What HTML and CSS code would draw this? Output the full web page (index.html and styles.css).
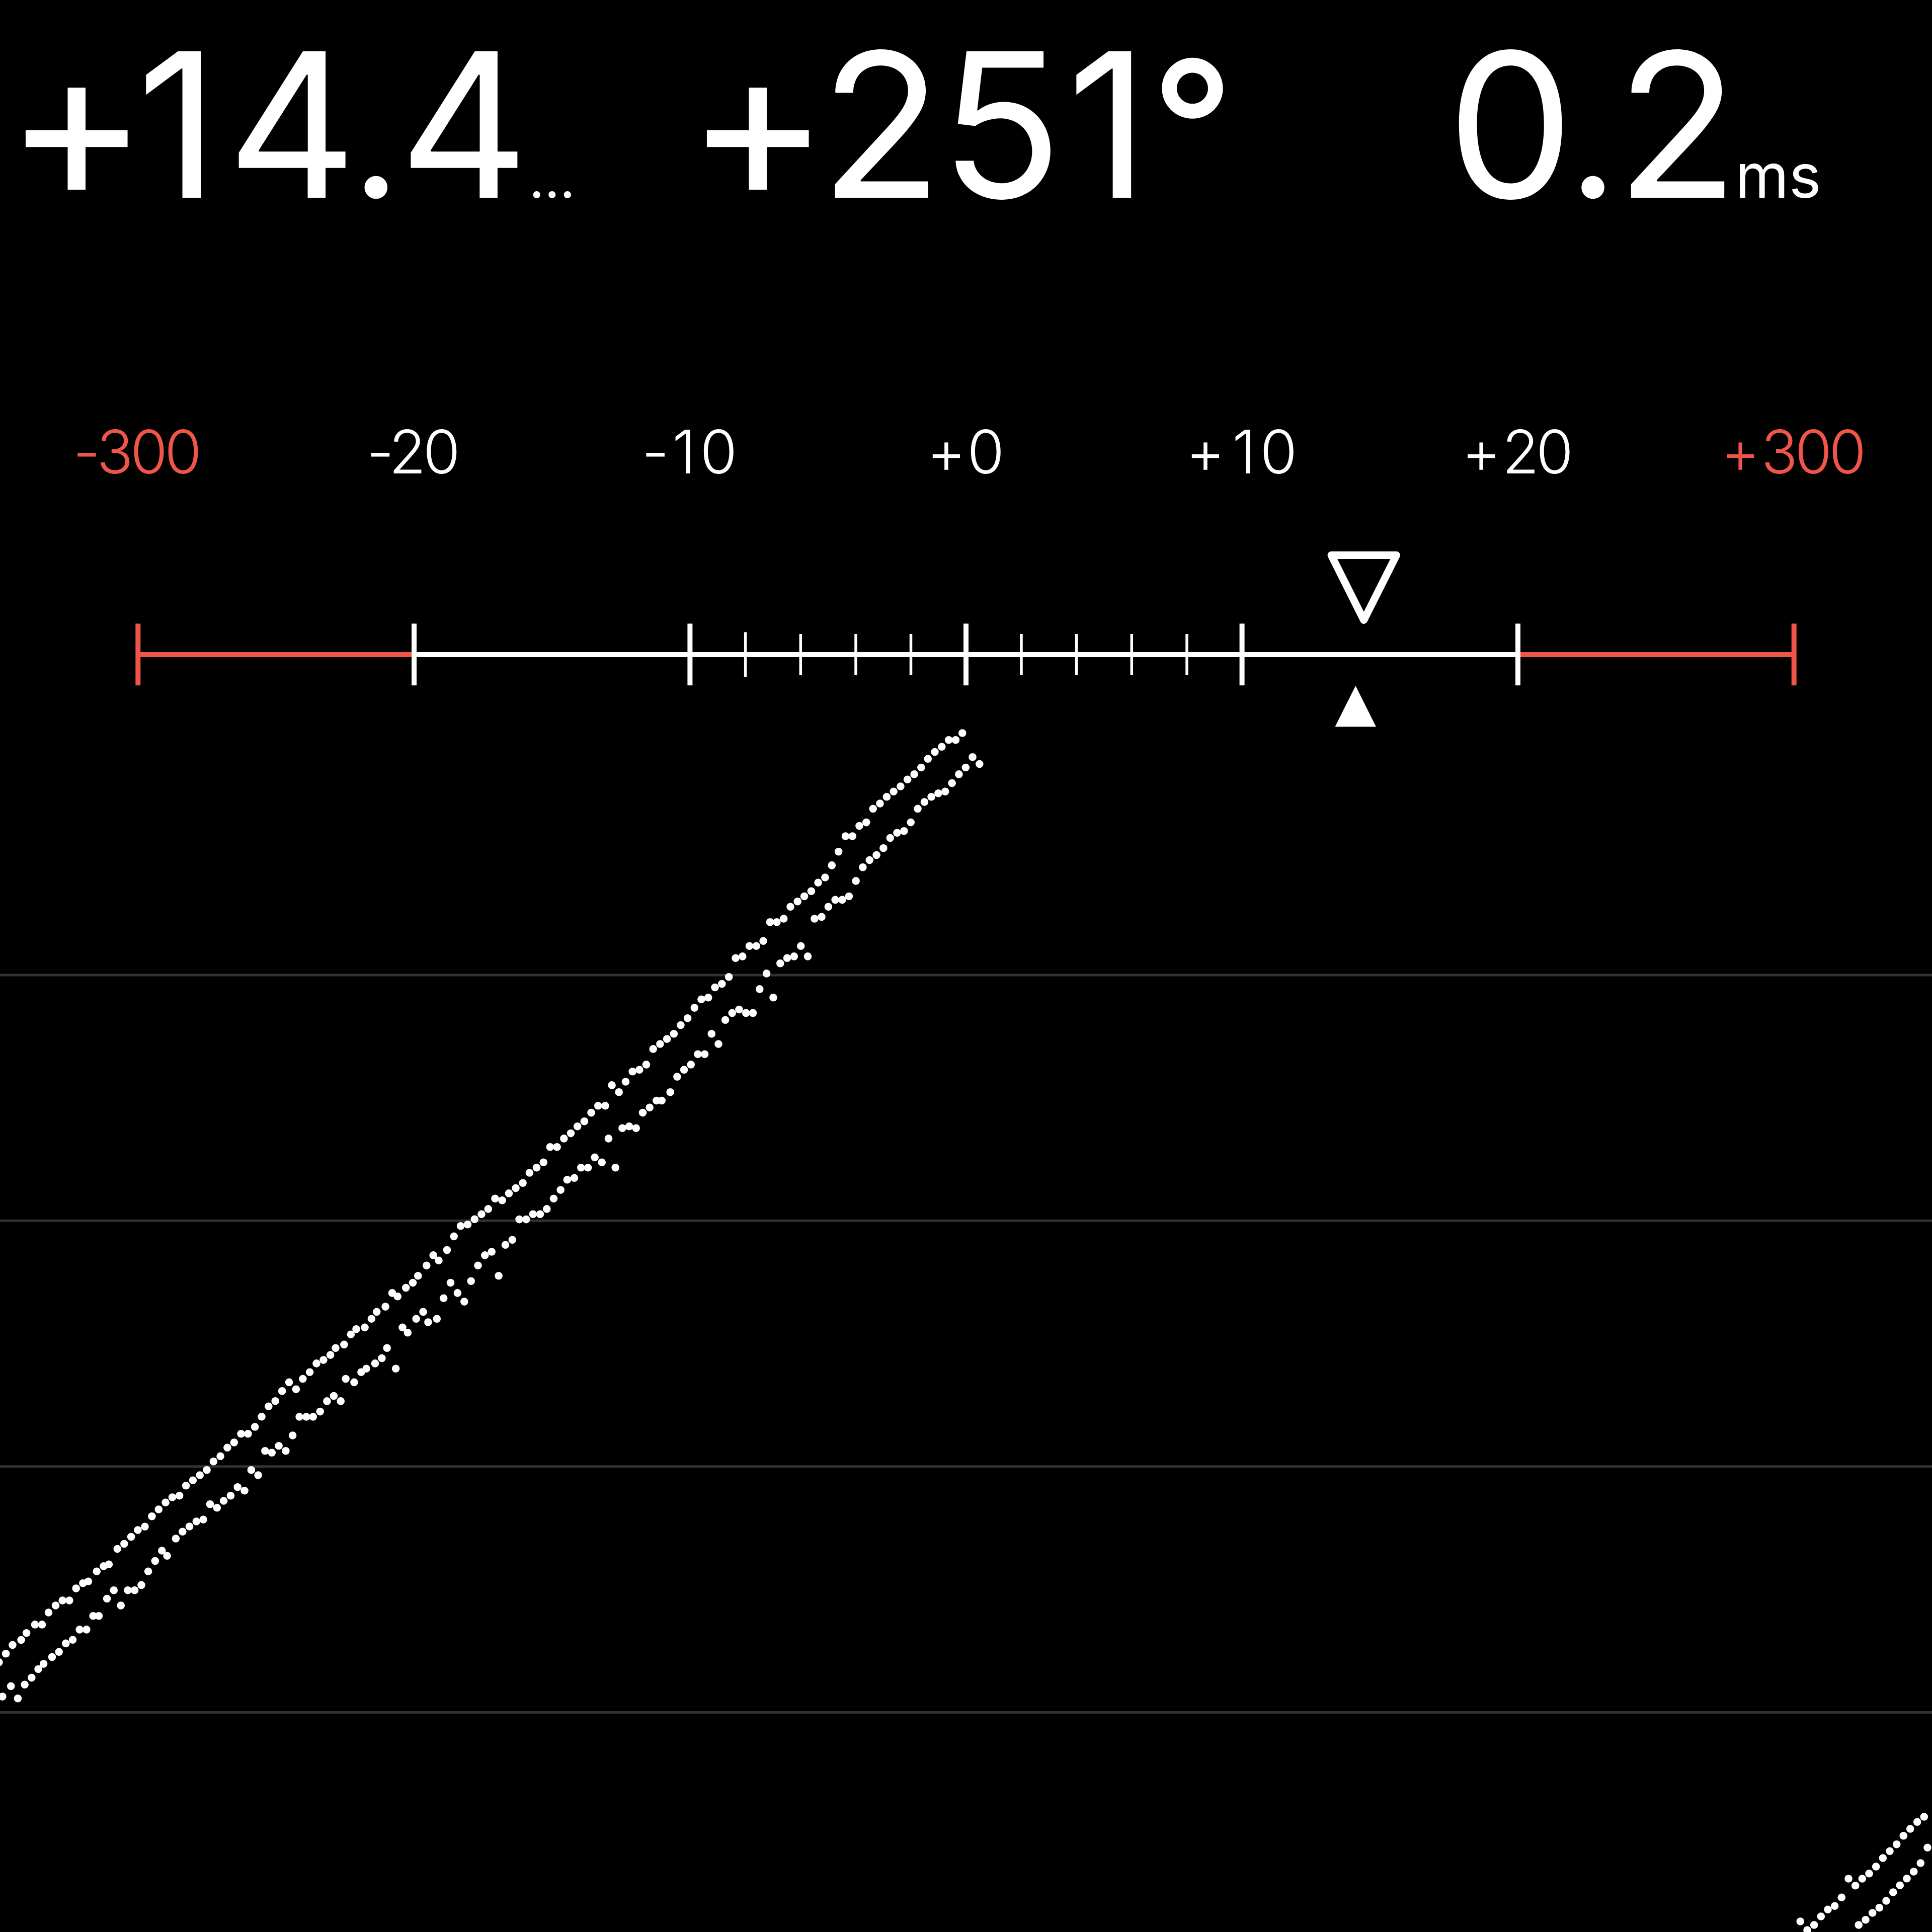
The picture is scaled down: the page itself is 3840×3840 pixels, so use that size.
FILE: index.html
```html
<!DOCTYPE html>
<html lang="en">
<head>
<meta charset="utf-8">
<title>Timegrapher</title>
<link rel="stylesheet" href="styles.css">
</head>
<body>
<main class="app">
  <header class="readouts">
    <div class="readout rate"><span class="value"><span class="sign">+</span><span class="one">1</span><span class="tight">4</span><span class="point">.</span>4</span><span class="unit ellipsis">…</span></div>
    <div class="readout amplitude"><span class="value"><span class="sign">+</span><span class="two">2</span>5<span class="one">1</span><span class="degree">°</span></span></div>
    <div class="readout beat"><span class="value"><span class="tight">0</span><span class="point">.</span><span class="last">2</span></span><span class="unit">ms</span></div>
  </header>

  <div class="labels">
    <div class="limit">-300</div>
    <div>-20</div>
    <div>-<span class="thin-one">1</span>0</div>
    <div><span class="plus">+</span>0</div>
    <div><span class="plus">+</span><span class="thin-one">1</span>0</div>
    <div><span class="plus">+</span>20</div>
    <div class="limit"><span class="plus">+</span>300</div>
  </div>

  <svg class="axis" viewBox="0 1000 3840 450" aria-hidden="true">
    <g class="limit-line">
      <path d="M274.3 1301H823M3017 1301H3565.7"/>
      <path d="M274.3 1239.5V1362.3M3565.7 1239.5V1362.3"/>
    </g>
    <g class="major">
      <path d="M823 1301H3017"/>
      <path d="M823 1239.5V1362.3M1371.4 1239.5V1362.3M1920 1239.5V1362.3M2468.6 1239.5V1362.3M3017 1239.5V1362.3"/>
    </g>
    <path class="minor" d="M1481.6 1256.5V1345.5M1591.3 1260V1342M1701 1260V1342M1810.5 1260V1342M2030 1260V1342M2139.6 1260V1342M2249.3 1260V1342M2359 1260V1342"/>
    <path class="marker-average" d="M2646 1103.5H2775.5L2710.7 1232.5Z"/>
    <path class="marker-current" d="M2694.3 1363L2735 1444.5H2653.5Z"/>
  </svg>

  <svg class="plot" viewBox="0 1450 3840 2390" aria-hidden="true">
    <path class="gridline" d="M0 1938H3840M0 2426.3H3840M0 2914.8H3840M0 3403.5H3840"/>
    <g id="trace"></g>
  </svg>
</main>
<script src="script.js"></script>
</body>
</html>
```
FILE: styles.css
```css
html,
body {
  margin: 0;
  background: #000;
}

.app {
  display: flex;
  flex-direction: column;
  width: 3840px;
  height: 3840px;
  overflow: hidden;
  color: #fff;
  background: #000;
}

.readouts {
  display: grid;
  grid-template-columns: 1371px 1477px 992px;
  height: 800px;
  font-family: Inter, "Liberation Sans", sans-serif;
  font-feature-settings: "calt" 0;
  white-space: nowrap;
}

.readout {
  display: flex;
  align-items: baseline;
  height: 495px;
  line-height: 495px;
}

.rate {
  padding-left: 10px;
}

.beat {
  padding-left: 28px;
}

.value {
  font-size: 400px;
  font-weight: 370;
}

.value span {
  line-height: 1;
}

.unit {
  font-size: 122px;
}

.ellipsis {
  font-size: 106px;
}

.sign {
  font-size: 430px;
  letter-spacing: -23px;
  vertical-align: -5px;
}

.amplitude .sign {
  margin-left: -7px;
  letter-spacing: -19px;
}

.one {
  margin-right: 17px;
}

.two {
  letter-spacing: -5px;
}

.amplitude .one {
  margin-left: 9px;
  margin-right: 4px;
}

.tight {
  letter-spacing: -12px;
}

.point {
  font-size: 345px;
  letter-spacing: -4px;
}

.last {
  letter-spacing: -7px;
}

.degree {
  font-size: 362px;
  font-weight: 460;
  vertical-align: 13px;
}

.labels {
  display: grid;
  grid-template-columns: repeat(7, 1fr);
  height: 200px;
  line-height: 195px;
  font-family: Inter, "Liberation Sans", sans-serif;
  font-feature-settings: "calt" 0;
  font-size: 120px;
  font-weight: 300;
  letter-spacing: -6px;
  text-indent: -8px;
  text-align: center;
}

.plus {
  letter-spacing: 2px;
}

.thin-one {
  margin: 0 14px 0 12px;
}

.limit {
  color: #f05549;
}

.axis {
  display: block;
  width: 3840px;
  height: 450px;
  fill: none;
  stroke: #fff;
  stroke-width: 10;
}

.limit-line {
  stroke: #f05549;
}

.minor {
  stroke-width: 5.5;
}

.marker-average {
  stroke-width: 15;
  stroke-linejoin: round;
}

.marker-current {
  fill: #fff;
  stroke: none;
}

.plot {
  display: block;
  width: 3840px;
  height: 2390px;
  overflow: visible;
  fill: #fff;
}

.gridline {
  stroke: #323232;
  stroke-width: 5;
}
```
FILE: script.js
```js
// Beat trace, stored in segments. Each segment has an origin, a scale and
// a flat list of x,y samples; both the tick and the tock line are included.
const segments = [
  { x: 1400, y: 1400, sx: 600 / 1568, sy: 600 / 1568, samples: [
    1340,149, 1305,185, 1269,185, 1233,220, 1197,247, 1161,283, 1126,328, 1090,363, 1055,390, 1019,426,
    983,453, 947,480, 912,515, 876,542, 841,613, 805,631, 769,685, 733,685, 697,765, 662,836, 627,899,
    591,926, 555,970, 519,997, 484,1024, 447,1051, 412,1113, 376,1131, 341,1131, 306,1229, 270,1255,
    234,1255, 198,1309, 162,1318, 127,1416, 91,1452, 55,1470, 20,1523,
    1429,310, 1393,274, 1357,328, 1322,363, 1286,409, 1251,453, 1215,462, 1179,480, 1143,507, 1108,542,
    1072,613, 1037,658, 1001,667, 965,694, 930,747, 894,783, 858,809, 823,846, 787,917, 751,997,
    716,1015, 680,1015, 644,1051, 609,1104, 572,1113, 537,1309, 501,1255, 466,1309, 430,1318, 394,1345,
    323,1398, 287,1479, 358,1523
  ] },
  { x: 950, y: 1850, sx: 650 / 1568, sy: 600 / 1568, samples: [
    1071,356, 1038,400, 1005,454, 972,490, 939,535, 906,562, 873,588, 840,614, 807,695, 774,722,
    741,731, 708,784, 676,838, 642,802, 610,909, 576,909, 543,945, 510,990, 477,1016, 445,1052,
    412,1079, 379,1123, 346,1123, 314,1203, 281,1230, 247,1257, 215,1310, 181,1337, 148,1364,
    116,1400, 82,1391, 49,1445, 17,1472,
    1318,427, 1285,427, 1252,409, 1219,427, 1186,463, 1153,588, 1120,535, 1087,641, 1054,641,
    1021,695, 988,722, 955,758, 922,838, 881,882, 856,882, 823,918, 790,945, 758,1025, 725,1016,
    692,1025, 659,1230, 626,1079, 594,1203, 560,1177, 527,1230, 494,1230, 462,1284, 428,1293,
    396,1346, 363,1391, 330,1445, 298,1472, 264,1472, 231,1499, 198,1499
  ] },
  { x: 550, y: 2250, sx: 700 / 1568, sy: 600 / 1568, samples: [
    881,453, 850,480, 819,488, 789,542, 758,613, 721,667, 697,640, 667,693, 629,747, 606,783, 575,809,
    538,854, 514,836, 484,907, 445,934, 422,970, 392,1015, 354,1024, 330,1051, 300,1104, 262,1122,
    239,1158, 208,1184, 177,1202, 147,1247, 116,1282, 86,1336, 55,1300, 24,1345,
    1049,560, 1018,586, 988,747, 957,622, 927,640, 896,693, 865,774, 835,881, 805,836, 774,783,
    743,863, 713,970, 674,988, 652,934, 621,970, 583,1042, 560,1015, 530,1229, 491,1122, 468,1175,
    438,1202, 399,1229, 376,1247, 345,1300, 307,1282, 285,1398, 254,1371, 224,1398, 193,1452,
    162,1479, 132,1479, 101,1479
  ] },
  { x: 300, y: 2600, sx: 600 / 1568, sy: 1 / 3, samples: [
    646,554, 611,586, 575,647, 540,708, 504,749, 468,749, 432,801, 397,832, 361,883, 325,914, 290,965,
    254,996, 218,1027, 182,1058, 148,1118, 111,1128, 76,1159, 40,1200, 5,1241,
    736,759, 700,851, 664,821, 628,862, 593,851, 557,996, 521,965, 486,1088, 450,1067, 414,1118,
    378,1149, 343,1190, 307,1169, 272,1261, 236,1272, 200,1302, 164,1333, 129,1374, 84,1477, 57,1446
  ] },
  { x: 0, y: 2850, sx: 550 / 1568, sy: 560 / 1568, samples: [
    821,516, 781,535, 743,573, 704,612, 665,640, 617,726, 587,736, 548,765, 500,821, 470,831, 431,860,
    393,927, 354,927, 315,955, 275,994, 238,1061, 198,1061, 150,1108, 120,1147, 71,1175, 33,1223,
    -6,1271,
    879,707, 840,765, 801,841, 763,870, 724,870, 685,955, 645,870, 606,917, 560,1013, 528,1013,
    490,1089, 451,1089, 412,1146, 373,1166, 334,1213, 295,1242, 247,1280, 217,1309, 179,1357,
    140,1395, 101,1472, 62,1404, 14,1462
  ] },
  { x: 3500, y: 3540, sx: 1 / 3, sy: 1 / 3, samples: [
    973,213, 932,244, 890,285, 850,326, 809,377, 768,418, 727,459, 686,510, 645,551, 604,582,
    563,623, 522,582, 481,694, 440,745, 399,766, 358,807, 317,858, 276,889, 235,837,
    993,397, 952,489, 911,540, 870,581, 829,622, 788,663, 747,714, 706,755, 665,786, 624,827, 583,858
  ] }
];

const trace = document.getElementById("trace");
for (const { x, y, sx, sy, samples } of segments) {
  for (let i = 0; i < samples.length; i += 2) {
    const dot = document.createElementNS("http://www.w3.org/2000/svg", "circle");
    dot.setAttribute("cx", (x + samples[i] * sx).toFixed(1));
    dot.setAttribute("cy", (y + samples[i + 1] * sy).toFixed(1));
    dot.setAttribute("r", "7.8");
    trace.append(dot);
  }
}
```
